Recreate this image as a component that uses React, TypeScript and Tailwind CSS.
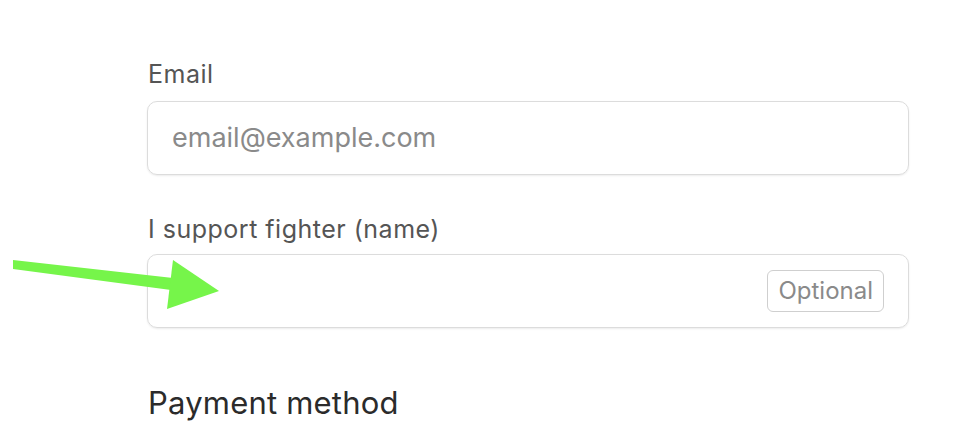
import React from "react";

export default function App() {
  return (
    <div
      className="relative w-[968px] h-[442px] bg-white overflow-hidden"
      style={{ fontFamily: "Inter, 'Noto Sans', sans-serif" }}
    >
      <div className="w-[762px] ml-[147px] pt-[58px] flex flex-col">
        {/* Email */}
        <label className="text-[25px] tracking-[0.5px] text-[#555] ml-[1px] leading-[32px]">Email</label>
        <div className="mt-[11px] h-[74px] rounded-[10px] border border-[#dcdcdc] shadow-[0_1px_2px_rgba(0,0,0,0.08)] flex items-center px-6">
          <input
            type="email"
            placeholder="email@example.com"
            className="w-full outline-none bg-transparent text-[27px] placeholder:text-[#8a8a8a] text-[#333]"
          />
        </div>

        {/* Fighter */}
        <label className="mt-[38px] text-[25px] tracking-[0.5px] text-[#555] ml-[1px] leading-[32px]">
          I support fighter (name)
        </label>
        <div className="mt-[9px] h-[74px] rounded-[10px] border border-[#dcdcdc] shadow-[0_1px_2px_rgba(0,0,0,0.08)] flex items-center pl-6 pr-[24px]">
          <input type="text" className="flex-1 outline-none bg-transparent text-[27px] text-[#333]" />
          <span className="h-[42px] px-[10px] flex items-center rounded-[6px] border border-[#cfcfcf] text-[24px] text-[#8a8a8a]">
            Optional
          </span>
        </div>

        <h2 className="mt-[56px] text-[31px] tracking-[0.2px] text-[#2b2b2b] font-normal ml-[1px] leading-[38px]">
          Payment method
        </h2>
      </div>

      {/* annotation arrow */}
      <svg className="absolute left-0 top-0" width="968" height="442" viewBox="0 0 968 442">
        <polygon points="13,260 173,278 171,290 13,269" fill="#76f54a" />
        <polygon points="173,260 219,291 167,309" fill="#76f54a" />
      </svg>
    </div>
  );
}
